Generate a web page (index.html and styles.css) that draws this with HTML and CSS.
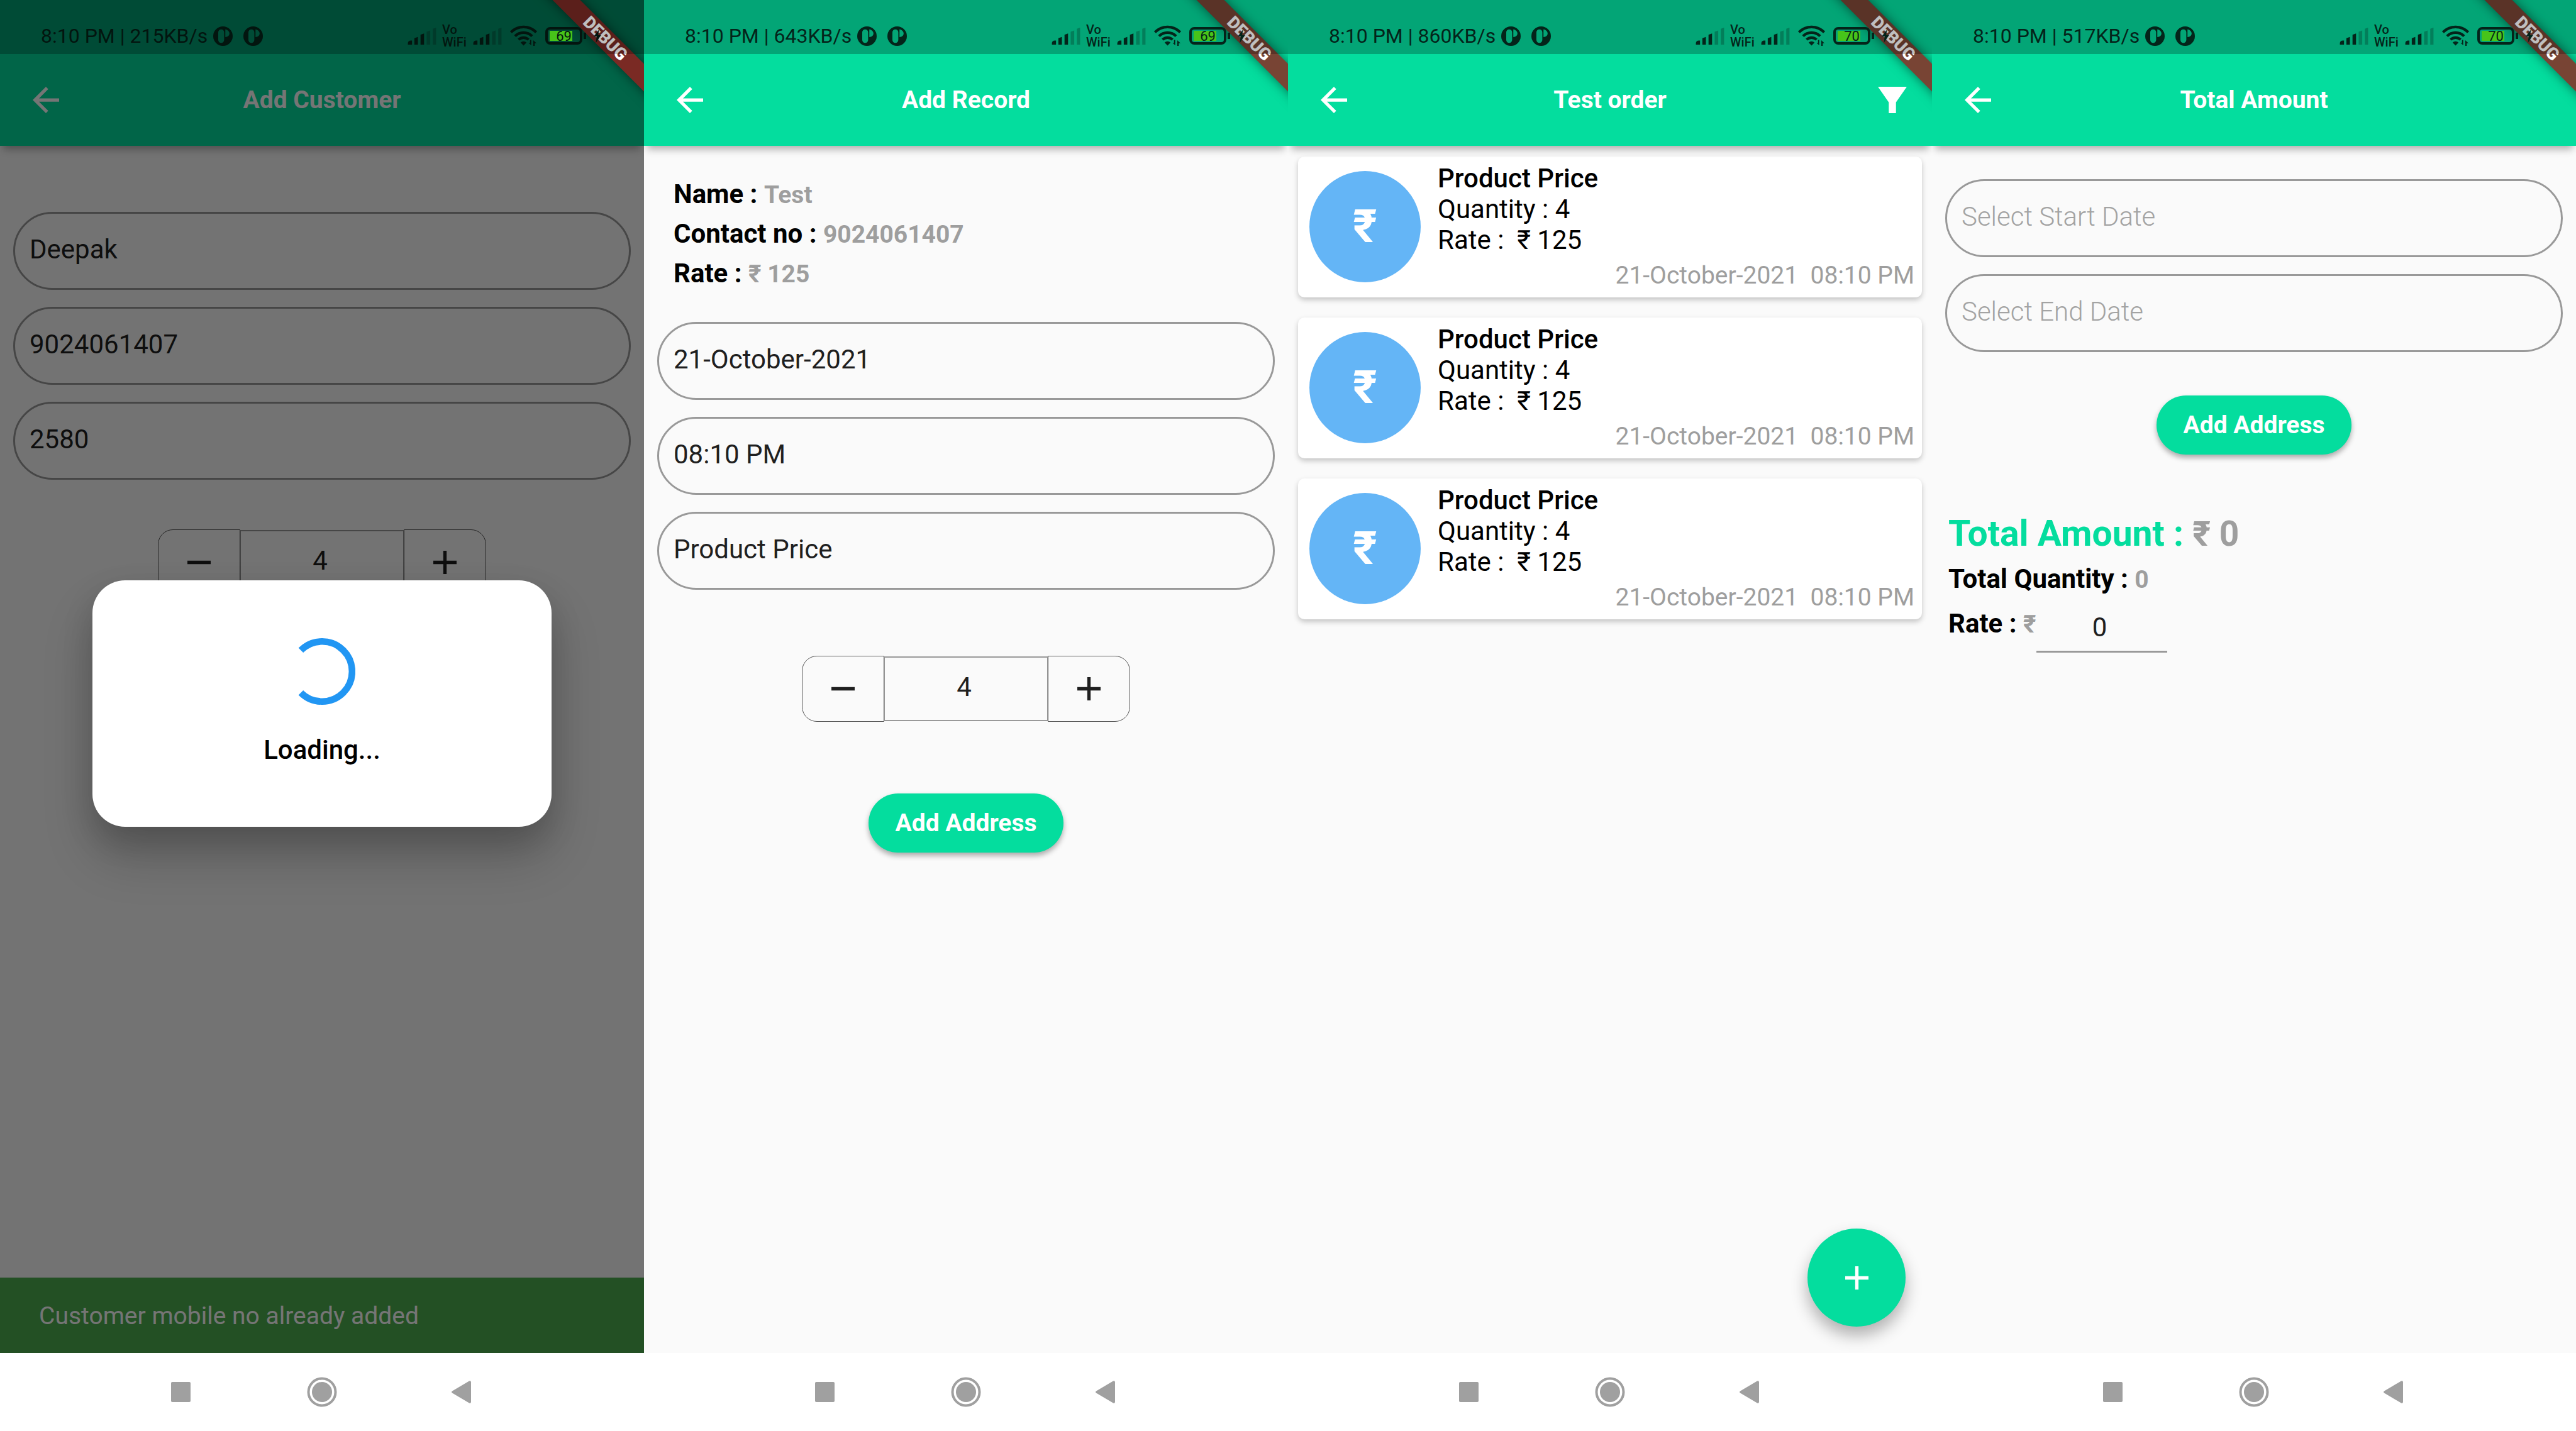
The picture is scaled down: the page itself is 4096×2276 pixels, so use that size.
FILE: index.html
```html
<!DOCTYPE html>
<html lang="en">
<head>
<meta charset="utf-8">
<title>Customer records</title>
<link rel="stylesheet" href="styles.css">
</head>
<body>
<svg class="sprite" aria-hidden="true">
  <symbol id="badge" viewBox="0 0 33 33"><path fill-rule="evenodd" d="M16.500 0a16.500 16.500 0 1 0 0 33a16.500 16.500 0 1 0 0-33zM13.500 5a5 5 0 0 1 5 5v13a5 5 0 0 1-10 0v-13a5 5 0 0 1 5-5zM20.500 5c4 .5 7 3.500 7 7c0 3.500-3 6-7 6z"/></symbol>
  <symbol id="signal" viewBox="0 0 48 30"><path d="M0 30v-3a5 5 0 0 1 5-4h2v7zM11 30V19l6-2v13zM21.500 30V13l6-2v19z"/><path opacity=".3" d="M32 30V8l6-2v24zM42.500 30V3l5.500-2v29z"/></symbol>
  <symbol id="wifi" viewBox="0 0 46 36"><g fill="none" stroke="currentColor" stroke-width="4.500"><path d="M1.500 12a30 30 0 0 1 43 0"/><path d="M8.500 18.500a20.500 20.500 0 0 1 29 0"/><path d="M14.500 24.500a12 12 0 0 1 17 0"/></g><path d="M23 34.500l-5-5a7 7 0 0 1 10 0zM36 25v9l-4.500-4h2.500v-5zM39.500 35v-9.500l5.500 5h-3v4.500z"/></symbol>
  <symbol id="bolt" viewBox="0 0 14 25"><path d="M10 0L0 13h5.500L4 25L14 10.500H8z"/></symbol>
  <symbol id="back" viewBox="4 4 16 16"><path d="M20 11H7.830l5.590-5.590L12 4l-8 8 8 8 1.410-1.410L7.830 13H20v-2z"/></symbol>
  <symbol id="filter" viewBox="0 0 48 44"><path d="M0 0h48L30 26v18H18V26z"/></symbol>
  <symbol id="plus" viewBox="5 5 14 14"><path d="M19 13h-6v6h-2v-6H5v-2h6V5h2v6h6v2z"/></symbol>
  <symbol id="minus" viewBox="5 5 14 14"><path d="M19 13H5v-2h14v2z"/></symbol>
  <symbol id="recents" viewBox="0 0 48 48"><rect x="8" y="8" width="31" height="32" rx="2"/></symbol>
  <symbol id="home" viewBox="0 0 48 48"><circle cx="24" cy="24" r="16"/><circle cx="24" cy="24" r="21.500" fill="none" stroke="currentColor" stroke-width="4"/></symbol>
  <symbol id="return" viewBox="0 0 48 48"><path d="M34 6.500q3-1 3 2v31q0 3-3 2L7 25.500q-2-1.500 0-3z"/></symbol>
</svg>

<div class="screens">

  <section class="phone phone-dimmed">
    <div class="status">
      <span class="clock">8:10 PM | 215KB/s</span>
      <svg class="badge"><use href="#badge"/></svg><svg class="badge"><use href="#badge"/></svg>
      <div class="radio">
        <div class="cells"><svg class="signal"><use href="#signal"/></svg><span class="vowifi">Vo<br>WiFi</span><svg class="signal"><use href="#signal"/></svg></div>
        <svg class="wifi"><use href="#wifi"/></svg>
        <span class="battery">69</span>
        <svg class="bolt"><use href="#bolt"/></svg>
      </div>
    </div>
    <div class="ribbon"><span class="ribbon-band">DEBUG</span></div>
    <header class="app-bar">
      <button class="icon-button" type="button" aria-label="Back"><svg class="back"><use href="#back"/></svg></button>
      <h1 class="title">Add Customer</h1>
    </header>
    <main class="page page-customer">
      <div class="fields">
        <input class="field" type="text" aria-label="Name" value="Deepak">
        <input class="field" type="text" aria-label="Contact number" value="9024061407">
        <input class="field" type="text" aria-label="Rate" value="2580">
      </div>
      <div class="stepper">
        <button class="step step-less" type="button" aria-label="Less"><svg class="sign"><use href="#minus"/></svg></button>
        <input class="step-value" type="text" aria-label="Quantity" value="4">
        <button class="step step-more" type="button" aria-label="More"><svg class="sign"><use href="#plus"/></svg></button>
      </div>
      <p class="snackbar">Customer mobile no already added</p>
    </main>
    <div class="barrier">
      <div class="dialog" role="dialog" aria-label="Loading">
        <svg class="spinner" viewBox="0 0 40 40"><path d="M7.300 7.300A18 18 0 1 1 7.300 32.700"/></svg>
        <p class="loading">Loading...</p>
      </div>
    </div>
    <nav class="nav">
      <button class="nav-button" type="button" aria-label="Recent apps"><svg class="nav-icon"><use href="#recents"/></svg></button>
      <button class="nav-button" type="button" aria-label="Home"><svg class="nav-icon"><use href="#home"/></svg></button>
      <button class="nav-button" type="button" aria-label="Return"><svg class="nav-icon"><use href="#return"/></svg></button>
    </nav>
  </section>

  <section class="phone">
    <div class="status">
      <span class="clock">8:10 PM | 643KB/s</span>
      <svg class="badge"><use href="#badge"/></svg><svg class="badge"><use href="#badge"/></svg>
      <div class="radio">
        <div class="cells"><svg class="signal"><use href="#signal"/></svg><span class="vowifi">Vo<br>WiFi</span><svg class="signal"><use href="#signal"/></svg></div>
        <svg class="wifi"><use href="#wifi"/></svg>
        <span class="battery">69</span>
        <svg class="bolt"><use href="#bolt"/></svg>
      </div>
    </div>
    <div class="ribbon"><span class="ribbon-band">DEBUG</span></div>
    <header class="app-bar">
      <button class="icon-button" type="button" aria-label="Back"><svg class="back"><use href="#back"/></svg></button>
      <h1 class="title">Add Record</h1>
    </header>
    <main class="page page-record">
      <div class="details">
        <p class="detail">Name : <span class="value">Test</span></p>
        <p class="detail">Contact no : <span class="value">9024061407</span></p>
        <p class="detail">Rate : <span class="value">₹ 125</span></p>
      </div>
      <div class="fields">
        <input class="field" type="text" aria-label="Date" value="21-October-2021">
        <input class="field" type="text" aria-label="Time" value="08:10 PM">
        <input class="field" type="text" aria-label="Product" value="Product Price">
      </div>
      <div class="stepper">
        <button class="step step-less" type="button" aria-label="Less"><svg class="sign"><use href="#minus"/></svg></button>
        <input class="step-value" type="text" aria-label="Quantity" value="4">
        <button class="step step-more" type="button" aria-label="More"><svg class="sign"><use href="#plus"/></svg></button>
      </div>
      <button class="submit" type="button">Add Address</button>
    </main>
    <nav class="nav">
      <button class="nav-button" type="button" aria-label="Recent apps"><svg class="nav-icon"><use href="#recents"/></svg></button>
      <button class="nav-button" type="button" aria-label="Home"><svg class="nav-icon"><use href="#home"/></svg></button>
      <button class="nav-button" type="button" aria-label="Return"><svg class="nav-icon"><use href="#return"/></svg></button>
    </nav>
  </section>

  <section class="phone">
    <div class="status">
      <span class="clock">8:10 PM | 860KB/s</span>
      <svg class="badge"><use href="#badge"/></svg><svg class="badge"><use href="#badge"/></svg>
      <div class="radio">
        <div class="cells"><svg class="signal"><use href="#signal"/></svg><span class="vowifi">Vo<br>WiFi</span><svg class="signal"><use href="#signal"/></svg></div>
        <svg class="wifi"><use href="#wifi"/></svg>
        <span class="battery">70</span>
        <svg class="bolt"><use href="#bolt"/></svg>
      </div>
    </div>
    <div class="ribbon"><span class="ribbon-band">DEBUG</span></div>
    <header class="app-bar">
      <button class="icon-button" type="button" aria-label="Back"><svg class="back"><use href="#back"/></svg></button>
      <h1 class="title">Test order</h1>
      <button class="icon-button action" type="button" aria-label="Filter"><svg class="filter"><use href="#filter"/></svg></button>
    </header>
    <main class="page page-orders">
      <ul class="orders">
        <li class="card">
          <span class="avatar">₹</span>
          <div class="order">
            <h2 class="product">Product Price</h2>
            <p class="line">Quantity : 4</p>
            <p class="line">Rate :&nbsp; ₹ 125</p>
            <p class="stamp">21-October-2021&nbsp; 08:10 PM</p>
          </div>
        </li>
        <li class="card">
          <span class="avatar">₹</span>
          <div class="order">
            <h2 class="product">Product Price</h2>
            <p class="line">Quantity : 4</p>
            <p class="line">Rate :&nbsp; ₹ 125</p>
            <p class="stamp">21-October-2021&nbsp; 08:10 PM</p>
          </div>
        </li>
        <li class="card">
          <span class="avatar">₹</span>
          <div class="order">
            <h2 class="product">Product Price</h2>
            <p class="line">Quantity : 4</p>
            <p class="line">Rate :&nbsp; ₹ 125</p>
            <p class="stamp">21-October-2021&nbsp; 08:10 PM</p>
          </div>
        </li>
      </ul>
      <button class="fab" type="button" aria-label="Add order"><svg class="sign"><use href="#plus"/></svg></button>
    </main>
    <nav class="nav">
      <button class="nav-button" type="button" aria-label="Recent apps"><svg class="nav-icon"><use href="#recents"/></svg></button>
      <button class="nav-button" type="button" aria-label="Home"><svg class="nav-icon"><use href="#home"/></svg></button>
      <button class="nav-button" type="button" aria-label="Return"><svg class="nav-icon"><use href="#return"/></svg></button>
    </nav>
  </section>

  <section class="phone">
    <div class="status">
      <span class="clock">8:10 PM | 517KB/s</span>
      <svg class="badge"><use href="#badge"/></svg><svg class="badge"><use href="#badge"/></svg>
      <div class="radio">
        <div class="cells"><svg class="signal"><use href="#signal"/></svg><span class="vowifi">Vo<br>WiFi</span><svg class="signal"><use href="#signal"/></svg></div>
        <svg class="wifi"><use href="#wifi"/></svg>
        <span class="battery">70</span>
        <svg class="bolt"><use href="#bolt"/></svg>
      </div>
    </div>
    <div class="ribbon"><span class="ribbon-band">DEBUG</span></div>
    <header class="app-bar">
      <button class="icon-button" type="button" aria-label="Back"><svg class="back"><use href="#back"/></svg></button>
      <h1 class="title">Total Amount</h1>
    </header>
    <main class="page page-total">
      <div class="fields">
        <input class="field" type="text" aria-label="Start date" placeholder="Select Start Date">
        <input class="field" type="text" aria-label="End date" placeholder="Select End Date">
      </div>
      <button class="submit" type="button">Add Address</button>
      <div class="totals">
        <p class="amount">Total Amount : <span class="amount-value">₹ 0</span></p>
        <p class="total">Total Quantity : <span class="value">0</span></p>
        <div class="total rate">
          <label for="rate">Rate : <span class="value">₹</span></label>
          <input class="rate-input" id="rate" type="text" value="0">
        </div>
      </div>
    </main>
    <nav class="nav">
      <button class="nav-button" type="button" aria-label="Recent apps"><svg class="nav-icon"><use href="#recents"/></svg></button>
      <button class="nav-button" type="button" aria-label="Home"><svg class="nav-icon"><use href="#home"/></svg></button>
      <button class="nav-button" type="button" aria-label="Return"><svg class="nav-icon"><use href="#return"/></svg></button>
    </nav>
  </section>

</div>
</body>
</html>
```
FILE: styles.css
```css
:root {
  --green: #04dd9e;
  --ink: #1f1f1f;
  --grey: #9e9e9e;
  --nav-height: 124px;
}

* { box-sizing: border-box; }

body {
  margin: 0;
  background: #fafafa;
  color: #000;
  font-family: Roboto, "Noto Sans", sans-serif;
  font-size: 42px;
}

h1, h2, p, ul { margin: 0; padding: 0; }
ul { list-style: none; }
svg { display: block; fill: currentColor; }
button, input { font: inherit; color: inherit; margin: 0; padding: 0; border: 0; background: none; }

.sprite { position: absolute; width: 0; height: 0; }

.screens {
  display: grid;
  grid-template-columns: repeat(4, 1fr);
  min-height: 100vh;
}

.phone {
  position: relative;
  display: flex;
  flex-direction: column;
  overflow: hidden;
}

/* System status bar, translucent over the app bar and the debug ribbon */
.status {
  position: absolute;
  inset: 0 0 auto;
  z-index: 4;
  height: 86px;
  padding: 28px 68px 0 65px;
  display: flex;
  align-items: center;
  background: rgba(0, 0, 0, .25);
  color: #04241a;
}
.phone-dimmed .status { color: #03150f; }
.clock { font-size: 32px; line-height: 38px; margin-right: 9px; }
.badge { width: 31px; height: 31px; margin-right: 17px; }
.radio { margin-left: auto; display: flex; align-items: center; gap: 13px; }
.cells { display: flex; align-items: center; gap: 9px; }
.signal { width: 46px; height: 28px; }
.vowifi { width: 40px; font-size: 20px; font-weight: 500; line-height: 20px; }
.wifi { width: 43px; height: 34px; }
.battery {
  position: relative;
  width: 59px;
  height: 28px;
  margin-right: 5px;
  border: 4px solid currentColor;
  border-radius: 8px;
  background: linear-gradient(to right, #47c41a 36px, transparent 36px) 3px 2px / 45px 16px no-repeat;
  font-size: 22px;
  line-height: 21px;
  text-align: center;
}
.battery::after {
  content: "";
  position: absolute;
  right: -10px;
  top: 5px;
  width: 4px;
  height: 10px;
  background: currentColor;
}
.bolt { width: 12px; height: 21px; }

.ribbon {
  position: absolute;
  top: 0;
  right: 0;
  z-index: 3;
  width: 250px;
  height: 250px;
  overflow: hidden;
  pointer-events: none;
}
.ribbon-band {
  position: absolute;
  left: 38px;
  top: 46px;
  width: 300px;
  height: 31px;
  transform: rotate(45deg);
  background: #784434;
  box-shadow: 0 0 18px rgba(0, 0, 0, .5);
  color: #fff;
  font-size: 27px;
  font-weight: 900;
  line-height: 31px;
  text-align: center;
}
.phone-dimmed .ribbon-band { background: #7a2a24; }

.app-bar {
  position: relative;
  z-index: 1;
  height: 232px;
  padding: 86px 52px 0;
  display: grid;
  grid-template-columns: 1fr auto 1fr;
  align-items: center;
  background: var(--green);
  box-shadow: 0 10px 12px -5px rgba(0, 0, 0, .32);
  color: #fff;
}
.icon-button { justify-self: start; display: flex; }
.back { width: 42px; height: 42px; }
.action { justify-self: end; margin-right: -12px; }
.filter { width: 46px; height: 42px; }
.title { font-size: 39px; font-weight: 700; line-height: 46px; }

.page {
  position: relative;
  flex: 1;
  display: flex;
  flex-direction: column;
}
.page-customer { padding: 105px 21px 0; }
.page-record { padding: 46px 21px 0; }
.page-orders { padding: 17px 16px 0; }
.page-total { padding: 53px 21px 0; }

.fields { display: flex; flex-direction: column; gap: 27px; }
.field {
  width: 100%;
  height: 124px;
  padding: 0 23px 5px;
  border: 3px solid #999;
  border-radius: 62px;
  color: var(--ink);
}
.field::placeholder { color: #a3a3a3; opacity: 1; font-weight: 300; }

.stepper {
  align-self: center;
  display: grid;
  grid-template-columns: 131px 260px 131px;
  height: 105px;
  margin-top: 105px;
  color: var(--ink);
}
.page-customer .stepper { margin-top: 79px; }
.step {
  display: flex;
  align-items: center;
  justify-content: center;
  border: 1px solid #555;
}
.step-less { border-radius: 24px 0 0 24px; }
.step-more { border-radius: 0 24px 24px 0; }
.step-value {
  width: 100%;
  height: 103px;
  align-self: center;
  padding: 0 6px 6px 0;
  border: 2px solid #999;
  border-width: 2px 1px;
  text-align: center;
}
.sign { width: 37px; height: 37px; }

.submit {
  align-self: center;
  height: 94px;
  margin-top: 114px;
  padding: 0 43px;
  border-radius: 47px;
  background: var(--green);
  box-shadow: 0 5px 8px rgba(0, 0, 0, .32);
  color: #fff;
  font-size: 39px;
  font-weight: 700;
}
.page-total .submit { margin-top: 69px; }

.details { padding: 0 26px; margin-bottom: 45px; }
.detail { font-weight: 700; line-height: 62px; }
.value { color: var(--grey); font-size: 39px; }

.snackbar {
  margin: auto -21px 0;
  height: 120px;
  padding: 0 62px;
  background: #4caf50;
  color: #fff;
  font-size: 39px;
  line-height: 122px;
}

.barrier {
  position: absolute;
  inset: 0 0 var(--nav-height);
  z-index: 2;
  display: flex;
  align-items: center;
  justify-content: center;
  padding-top: 86px;
  background: rgba(0, 0, 0, .54);
}
.dialog {
  width: 730px;
  height: 392px;
  padding-top: 92px;
  display: flex;
  flex-direction: column;
  align-items: center;
  border-radius: 52px;
  background: #fff;
  box-shadow: 0 48px 80px rgba(0, 0, 0, .2), 0 22px 50px rgba(0, 0, 0, .14);
}
.spinner { width: 106px; height: 106px; fill: none; stroke: #2196f3; stroke-width: 4; }
.loading { margin-top: 47px; font-weight: 500; line-height: 50px; }

.orders { display: flex; flex-direction: column; gap: 32px; }
.card {
  display: flex;
  gap: 27px;
  height: 224px;
  padding: 10px 12px 0 18px;
  border-radius: 10px;
  background: #fff;
  box-shadow: 0 4px 8px rgba(0, 0, 0, .22);
}
.avatar {
  flex: none;
  width: 177px;
  height: 177px;
  margin-top: 13px;
  border-radius: 50%;
  background: #64b5f6;
  color: #fff;
  font-size: 73px;
  font-weight: 700;
  line-height: 177px;
  text-align: center;
}
.order { flex: 1; }
.product { font-size: 42px; font-weight: 500; line-height: 49px; }
.line { line-height: 49px; }
.stamp { margin-top: 9px; color: var(--grey); font-size: 39px; line-height: 46px; text-align: right; }

.fab {
  position: absolute;
  right: 42px;
  bottom: 42px;
  width: 156px;
  height: 156px;
  display: flex;
  align-items: center;
  justify-content: center;
  border-radius: 50%;
  background: var(--green);
  box-shadow: 0 14px 26px rgba(0, 0, 0, .3);
  color: #fff;
}

.totals { margin-top: 89px; padding: 0 5px; font-weight: 700; }
.amount { color: var(--green); font-size: 57px; line-height: 74px; }
.amount-value { color: var(--grey); font-size: 55px; }
.total { line-height: 70px; }
.rate { display: flex; align-items: flex-start; }
.rate-input {
  width: 208px;
  height: 81px;
  padding: 2px 6px 0 0;
  border-bottom: 3px solid #999;
  color: var(--ink);
  font-weight: 400;
  text-align: center;
}

.nav {
  height: var(--nav-height);
  padding: 0 176px;
  display: grid;
  grid-template-columns: repeat(3, 1fr);
  background: #fff;
  color: #a0a0a0;
}
.nav-button { display: flex; align-items: center; justify-content: center; }
.nav-icon { width: 48px; height: 48px; }
```
